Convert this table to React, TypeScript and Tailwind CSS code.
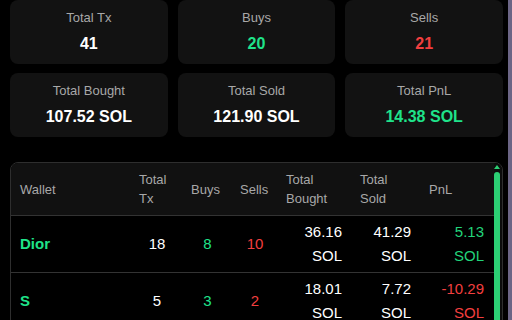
import React from "react";

const GREEN = "text-[#1fe38a]";
const RED = "text-[#f23f3f]";

function StatCard({ label, value, color }: { label: string; value: string; color: string }) {
  return (
    <div className="bg-[#121212] rounded-lg h-[64px] flex flex-col items-center pt-2">
      <div className="text-[13px] leading-5 text-[#a8a8a8]">{label}</div>
      <div className={`mt-1 text-[16px] leading-6 font-bold ${color}`}>{value}</div>
    </div>
  );
}

const cols = "grid grid-cols-[120px_52px_49px_46px_74px_67px_75px]";

type Row = { wallet: string; tx: number; buys: number; sells: number; bought: string; sold: string; pnl: string; pos: boolean };

const rows: Row[] = [
  { wallet: "Dior", tx: 18, buys: 8, sells: 10, bought: "36.16", sold: "41.29", pnl: "5.13", pos: true },
  { wallet: "S", tx: 5, buys: 3, sells: 2, bought: "18.01", sold: "7.72", pnl: "-10.29", pos: false },
];

export default function App() {
  return (
    <div className="flex h-screen w-full overflow-hidden bg-black font-['Liberation_Sans',Arial,sans-serif]">
      <div className="flex-1 pl-[10px] pr-[5px]">
        <div className="grid grid-cols-3 gap-x-[10px] gap-y-[9px]">
          <StatCard label="Total Tx" value="41" color="text-white" />
          <StatCard label="Buys" value="20" color={GREEN} />
          <StatCard label="Sells" value="21" color={RED} />
          <StatCard label="Total Bought" value="107.52 SOL" color="text-white" />
          <StatCard label="Total Sold" value="121.90 SOL" color="text-white" />
          <StatCard label="Total PnL" value="14.38 SOL" color={GREEN} />
        </div>

        <div className="mt-[25px] rounded-lg border border-[#2e2e2e] overflow-hidden flex">
          <div className="flex-1">
            <div className={`${cols} bg-[#111111] border-b border-[#333333] h-[53px] text-[13px] leading-[19px] text-[#a8a8a8]`}>
              <div className="pl-[9px] flex items-center">Wallet</div>
              <div className="px-2 flex items-center">Total<br />Tx</div>
              <div className="px-2 flex items-center">Buys</div>
              <div className="px-2 flex items-center">Sells</div>
              <div className="px-2 flex items-center">Total<br />Bought</div>
              <div className="px-2 flex items-center">Total<br />Sold</div>
              <div className="pl-[10px] flex items-center">PnL</div>
            </div>
            {rows.map((r) => (
              <div key={r.wallet} className={`${cols} border-b border-[#333333] h-[57px] text-[15px] leading-6 text-white`}>
                <div className={`pl-[9px] flex items-center font-bold ${GREEN}`}>{r.wallet}</div>
                <div className="px-2 flex items-center justify-center">{r.tx}</div>
                <div className={`px-2 flex items-center justify-center ${GREEN}`}>{r.buys}</div>
                <div className={`px-2 flex items-center justify-center ${RED}`}>{r.sells}</div>
                <div className="pl-2 pr-[10px] flex flex-col justify-center items-end text-right">
                  <span>{r.bought}</span>
                  <span>SOL</span>
                </div>
                <div className="pl-2 pr-[8px] flex flex-col justify-center items-end text-right">
                  <span>{r.sold}</span>
                  <span>SOL</span>
                </div>
                <div className={`pl-2 pr-[10px] flex flex-col justify-center items-end text-right ${r.pos ? "text-[#22d47a]" : "text-[#f23f3f]"}`}>
                  <span>{r.pnl}</span>
                  <span>SOL</span>
                </div>
              </div>
            ))}
          </div>
          <div className="w-[8px] bg-[#0c0c0c] flex flex-col items-start pt-[2px]">
            <svg width="6" height="4" viewBox="0 0 6 4">
              <polygon points="3,0 6,4 0,4" fill="#2ccf74" />
            </svg>
            <div className="mt-[3px] w-[6px] flex-1 rounded-t-full bg-[#2ccf74]" />
          </div>
        </div>
      </div>
      <div className="w-[4px] bg-[#6b6585]" />
    </div>
  );
}
